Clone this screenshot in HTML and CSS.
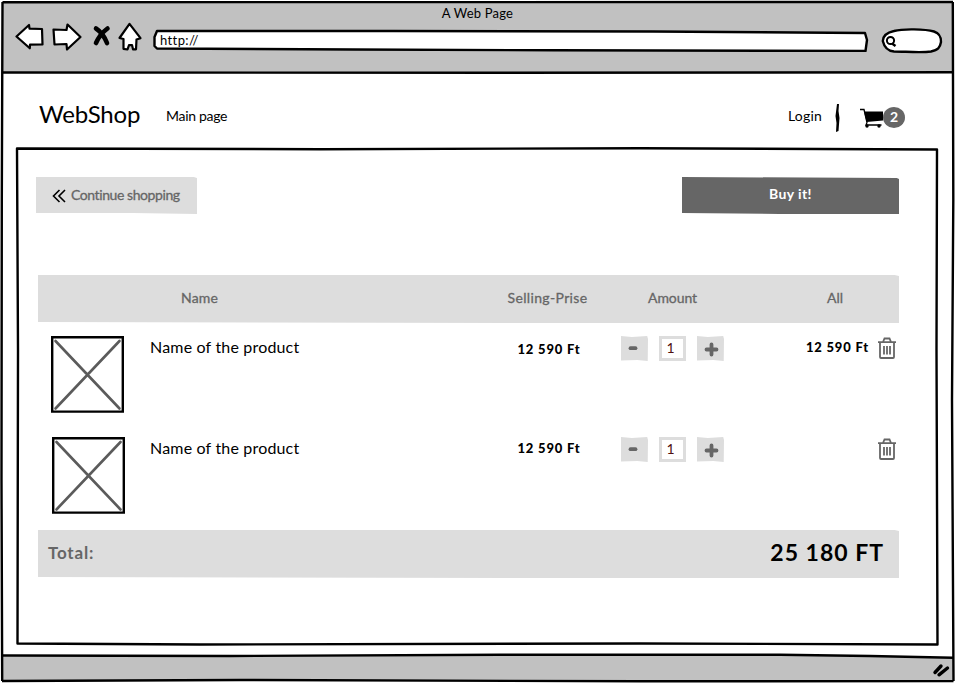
FILE: index.html
```
<!DOCTYPE html>
<html lang="en">
<head>
<meta charset="utf-8">
<title>WebShop</title>
<link rel="stylesheet" href="styles.css">
</head>
<body>
<div class="window">
  <header class="chrome">
    <div class="window-title"><span class="t-title">A Web Page</span></div>
    <div class="toolbar">
      <svg class="tools" viewBox="0 0 128 34" width="128" height="34" fill="#fff" stroke="#000" stroke-width="2.200" stroke-linejoin="round" stroke-linecap="round">
        <path d="M1.500 16.500L14 5l.5 3.700L27 9l.5 15.500-12.500.2-.2 3.600z"/>
        <path d="M38.500 9.500L51.500 10 52.500 4.500 65.500 17 52 29.500 51.500 24 39.500 24.500z"/>
        <path d="M81 8.500Q88 13 92 23M92.500 8.500Q85 14 81 23" fill="none" stroke-width="4.600"/>
        <path d="M104.500 18L114.500 3.800 125.500 18.200 121.500 19.500 121 29.300 118 29.300 117 25 114 25.200 112.500 29.500 108.500 28.800 108.500 19z"/>
      </svg>
      <div class="address"><svg class="skin" viewBox="0 0 716 24" width="716" height="24"><path d="M4 3L240 3 500 3.500 712 5 714 12 712.500 23 400 22.300 200 21.500 4 20.500 1.500 18 1.500 9z" fill="#fff" stroke="#000" stroke-width="2.400" stroke-linejoin="round"/></svg><span class="t-url">http://</span></div>
      <svg class="search" viewBox="0 0 62 28" width="62" height="28"><path d="M1.800 14C2 9 6 5.500 13 4 22 1.500 44 2 53 4.500 59 6.500 60 10 60 15 59 21 57 23 50 24.500 40 26 24 24.500 13 24.500 6 24 3 19 1.800 14z" fill="#fff" stroke="#000" stroke-width="2.400"/><circle cx="9.500" cy="13.500" r="3.600" fill="none" stroke="#000" stroke-width="2"/><path d="M11 16.500l3.500 2.500" stroke="#000" stroke-width="2.500"/></svg>
    </div>
  </header>

  <main>
    <nav class="nav">
      <span class="brand">WebShop</span>
      <span class="t-nav">Main page</span>
      <span class="login">Login</span>
      <svg class="divider" viewBox="0 0 6 30" width="6" height="30"><path d="M3 1L5 1 4.500 8 5.500 15 4.500 28 2 29 2.500 20 1.500 13z"/></svg>
      <svg class="cart" viewBox="0 0 24 20" width="24" height="20"><path d="M4 3.500H23v9L6.500 14z"/><path d="M0 1.500h4l3 13L6 17H21.500" fill="none" stroke="#000" stroke-width="1.300"/><circle cx="7" cy="18" r="1.700"/><circle cx="19" cy="18" r="1.700"/></svg>
      <span class="badge">2</span>
    </nav>

    <section class="panel">
      <div class="actions">
        <div class="continue"><svg viewBox="0 0 14 14" width="14" height="14" fill="none" stroke="#000" stroke-width="1.600"><path d="M7.500 1L1.500 7l6 6M13 1L7 7l6 6"/></svg><span class="t-continue">Continue shopping</span></div>
        <div class="buy"><span>Buy it!</span></div>
      </div>

      <div class="row head">
        <span></span><span class="h-name">Name</span><span class="h-price">Selling-Prise</span><span class="h-amount">Amount</span><span class="h-all">All</span>
      </div>

      <div class="row item">
        <svg class="thumb" viewBox="0 0 73 77" width="73" height="77"><path d="M1.200 1.300H71.800V75.600H1.200z" fill="#fff" stroke="#000" stroke-width="2.400"/><path d="M4.500 5L68.500 72.500M68.500 5L4.500 72.500" stroke="#5b5b5b" stroke-width="2.600" stroke-linecap="round"/></svg>
        <span class="name">Name of the product</span>
        <span class="price">12 590 Ft</span>
        <div class="stepper"><div class="step"><svg viewBox="0 0 27 24" width="27" height="24"><path d="M9.500 12.200h5" /></svg></div><div class="qty">1</div><div class="step"><svg viewBox="0 0 27 24" width="27" height="24"><path d="M9.500 13.500h10M14.500 8.500v10"/></svg></div></div>
        <span class="price sum">12 590 Ft</span>
        <svg class="trash" viewBox="0 0 20 22" width="20" height="22" fill="none" stroke="#666" stroke-width="1.800"><path d="M1 5.200H19M6 5L7.500 1.500H12.500L14 5M3 6v14q0 1 1 1H16q1 0 1-1V6M7 9v8.500M10 9v8.500M13 9v8.500"/></svg>
      </div>

      <div class="row item second">
        <svg class="thumb" viewBox="0 0 73 77" width="73" height="77"><path d="M1.200 1.300H71.800V75.600H1.200z" fill="#fff" stroke="#000" stroke-width="2.400"/><path d="M4.500 5L68.500 72.500M68.500 5L4.500 72.500" stroke="#5b5b5b" stroke-width="2.600" stroke-linecap="round"/></svg>
        <span class="name">Name of the product</span>
        <span class="price">12 590 Ft</span>
        <div class="stepper"><div class="step"><svg viewBox="0 0 27 24" width="27" height="24"><path d="M9.500 12.200h5" /></svg></div><div class="qty">1</div><div class="step"><svg viewBox="0 0 27 24" width="27" height="24"><path d="M9.500 13.500h10M14.500 8.500v10"/></svg></div></div>
        <span></span>
        <svg class="trash" viewBox="0 0 20 22" width="20" height="22" fill="none" stroke="#666" stroke-width="1.800"><path d="M1 5.200H19M6 5L7.500 1.500H12.500L14 5M3 6v14q0 1 1 1H16q1 0 1-1V6M7 9v8.500M10 9v8.500M13 9v8.500"/></svg>
      </div>

      <div class="total"><span class="t-total">Total:</span><span class="t-sum">25 180 FT</span></div>
    </section>
  </main>

  <!-- Hand-drawn outlines of the window and the panel -->
  <svg class="outline" viewBox="0 0 955 683" width="955" height="683" fill="none" stroke="#000" stroke-width="2.400" stroke-linejoin="round">
    <path d="M3 656.500L230 655.500 640 654.500 820 655 870 656 953 657.500V681L600 681.500 250 680 3 681.500z" fill="#c1c1c1" stroke="none"/>
    <path d="M2.500 2.200L953 2M952.800 2L953.300 200 952 400 953.500 681M2.500 2L1.800 200 1.500 480 2.200 681M2 681L240 680 640 681.300 953.500 681"/>
    <path d="M2 72.500L500 72.800 953 72.300"/>
    <path d="M2 655.500L230 656 500 654.800 780 654.800 870 656 953 657.800"/>
    <path d="M17 148.500L320 149.200 640 148.200 937 149.500 936.500 350 937.500 644.500 640 643.500 200 644.500 17.500 643.500 18 350z"/>
    <path d="M935 672.500L941 666M939 674.800L947.500 668" stroke-width="3.400" stroke-linecap="round"/>
  </svg>
</div>
</body>
</html>
```
FILE: styles.css
```
* { box-sizing: border-box; }
body { margin: 0; background: #fff; color: #000; font-family: Lato, "Noto Sans", sans-serif; font-variant-ligatures: none; overflow: hidden; }
svg { display: block; flex: none; }
span { white-space: nowrap; }
.window { position: relative; width: 955px; height: 683px; padding-top: 2px; }
.outline { position: absolute; inset: 0; pointer-events: none; }

.chrome { height: 71px; margin: 0 2px; background: #c1c1c1; }
.window-title { height: 22px; padding-top: 3px; text-align: center; font-size: 13px; line-height: 16px; letter-spacing: 0.2px; }
.toolbar { display: flex; padding-left: 13px; }
.tools { margin-top: -4px; }
.address { position: relative; margin: 4px 0 0 10px; width: 716px; height: 24px; padding-left: 7px; font-size: 13px; line-height: 24px; letter-spacing: 0.4px; }
.address span { position: relative; }
.skin { position: absolute; left: 0; top: 0; }
.search { margin: 3px 0 0 12px; }

.nav { display: flex; align-items: center; height: 75px; padding: 8px 50px 0 39px; }
.brand { font-size: 24px; width: 127px; letter-spacing: -0.2px; margin-top: -2px; }
.t-nav { font-size: 14px; margin-top: 2px; letter-spacing: -0.3px; }
.login { margin-left: auto; font-size: 14px; margin-top: 2px; letter-spacing: 0.2px; }
.divider { margin: 6px 20px 0 12px; }
.cart { margin-top: 6px; }
.badge { width: 22px; height: 21px; margin: 6px 0 0 -1px; border-radius: 50%; background: #666; color: #fff; text-align: center; font-weight: 700; font-size: 14px; line-height: 19px; }

.panel { margin: 0 17px; padding: 29px 39px 0 21px; height: 497px; }
.actions { display: flex; justify-content: space-between; margin-left: -2px; }
.continue { display: flex; align-items: center; width: 161px; height: 37px; padding: 0 0 3px 16px; gap: 5px; background: #ddd; color: #666; font-size: 14px; letter-spacing: -0.42px; -webkit-text-stroke: 0.3px #666; clip-path: polygon(0 0, 70% 0, 98% 0, 100% 1px, 100% 100%, 60% 36px, 0 36px); }
.continue svg { margin-top: 4px; }
.buy { width: 217px; height: 37px; background: #666; color: #fff; text-align: center; font-weight: 700; font-size: 14px; line-height: 34px; letter-spacing: 0.4px; clip-path: polygon(0 0, 99% 1px, 100% 2px, 100% 100%, 45% 100%, 0 36px); }

.row { display: grid; grid-template-columns: 112px 347px 104px 143px 125px 30px; }
.head { height: 48px; margin-top: 61px; align-items: center; background: #ddd; color: #666; font-size: 14px; -webkit-text-stroke: 0.3px #666; clip-path: polygon(0 0, 99.5% 0, 100% 1px, 100% 100%, 60% 100%, 0 47px); }
.head span { padding-bottom: 3px; }
.h-name { padding-left: 31px; letter-spacing: 0.2px; }
.h-price, .h-amount { text-align: center; }
.h-price { letter-spacing: 0.35px; margin-left: -3px; }
.h-amount { letter-spacing: -0.1px; }
.h-all { padding-left: 83px; }

.item { height: 101px; padding-top: 13px; align-items: start; }
.thumb { margin-left: 13px; }
.second .thumb { margin-left: 14px; }
.name { font-size: 16px; line-height: 22px; letter-spacing: 0.18px; }
.price { padding-top: 3px; text-align: center; font-size: 13px; line-height: 20px; font-weight: 900; letter-spacing: 0.8px; }
.second .price { padding-top: 1px; }
.sum { padding-top: 1px; text-align: right; }
.stepper { display: flex; gap: 11px; padding-left: 20px; }
.step { width: 27px; height: 25px; background: #ddd; clip-path: polygon(0 0, 40% 1px, 97% 0, 100% 3px, 99% 100%, 60% 24px, 0 98%); }
.step path { stroke: #666; stroke-width: 3.8px; stroke-linecap: round; }
.qty { width: 27px; height: 25px; border: 3px solid #ddd; background: #fff; color: #501010; font-size: 14px; line-height: 17px; text-align: center; padding-right: 4px; }
.trash { margin: 1px 0 0 8px; }

.total { display: flex; align-items: center; justify-content: space-between; height: 48px; margin-top: 5px; padding: 0 15px 4px 10px; background: #ddd; clip-path: polygon(0 0, 99.5% 0, 100% 1px, 100% 100%, 60% 100%, 0 47px); }
.t-total { font-size: 17px; font-weight: 700; color: #666; letter-spacing: 0.8px; }
.t-sum { font-size: 23px; font-weight: 700; letter-spacing: 1px; }
```
